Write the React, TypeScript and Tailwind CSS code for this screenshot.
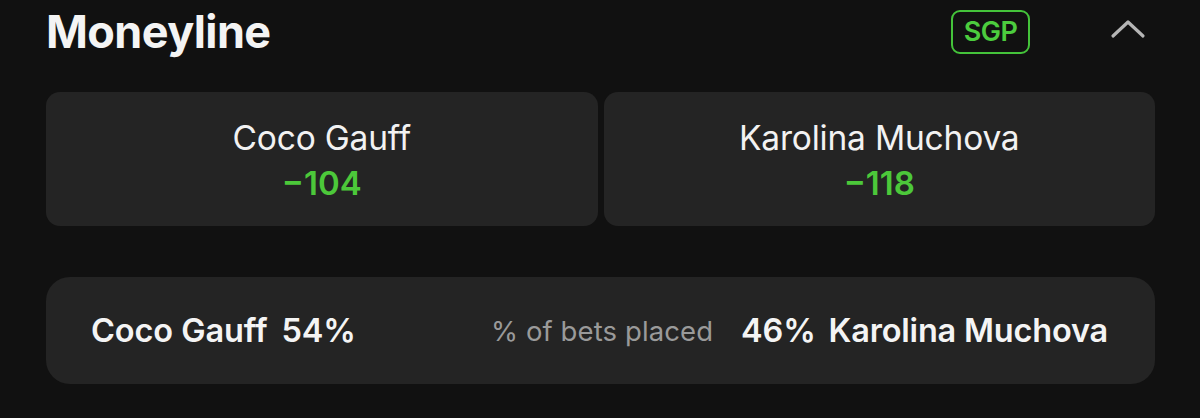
import React from "react";

function Chevron() {
  return (
    <svg width="36" height="20" viewBox="0 0 36 20" fill="none">
      <path d="M3 17 L18 3 L33 17" stroke="#b5b5b5" strokeWidth="3.2" strokeLinecap="round" strokeLinejoin="round" />
    </svg>
  );
}

function Card({ name, odds }: { name: string; odds: string }) {
  return (
    <div className="flex-1 h-[134px] rounded-[14px] bg-[#242424] flex flex-col items-center justify-center pt-[4px]">
      <div className="text-[33.5px] leading-[38px] text-[#f2f2f2] font-normal tracking-[-0.2px]">{name}</div>
      <div className="text-[33px] leading-[40px] text-[#4cc83a] font-semibold mt-[6px]">{odds}</div>
    </div>
  );
}

export default function App() {
  return (
    <div className="w-[1200px] h-[418px] bg-[#111111] overflow-hidden" style={{ fontFamily: "Inter, 'Noto Sans', sans-serif" }}>
      <div className="flex items-center h-[62px] pl-[46px] pr-[54px] pt-[2px]">
        <div className="text-[45px] leading-[50px] font-bold text-[#f4f4f4] tracking-[-0.6px]">Moneyline</div>
        <div className="ml-auto flex items-center">
          <div className="w-[79px] h-[44px] rounded-[9px] border-[2.5px] border-[#44c33a] flex items-center justify-center text-[27px] font-semibold text-[#4ccc3e] tracking-[-0.5px]">
            SGP
          </div>
          <div className="ml-[80px] flex items-center -mt-[7px]">
            <Chevron />
          </div>
        </div>
      </div>
      <div className="flex gap-[6px] mx-[46px] mt-[30px] w-[1109px]">
        <Card name="Coco Gauff" odds="−104" />
        <Card name="Karolina Muchova" odds="−118" />
      </div>
      <div className="mx-[46px] mt-[51px] w-[1109px] h-[107px] rounded-[24px] bg-[#242424] flex items-center pl-[45px] pr-[47px] pt-[2px]">
        <div className="text-[32.5px] font-semibold text-[#f4f4f4] flex gap-[14px] tracking-[-0.1px]">
          <span>Coco Gauff</span>
          <span>54%</span>
        </div>
        <div className="ml-auto text-[27.5px] text-[#9a9a9a] font-normal tracking-[0.1px]">% of bets placed</div>
        <div className="ml-[28px] text-[32.5px] font-semibold text-[#f4f4f4] flex gap-[13px] tracking-[-0.2px]">
          <span>46%</span>
          <span>Karolina Muchova</span>
        </div>
      </div>
    </div>
  );
}
